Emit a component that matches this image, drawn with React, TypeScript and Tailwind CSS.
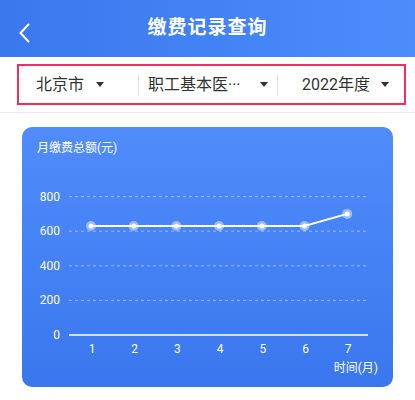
import React from "react";

const months = [1, 2, 3, 4, 5, 6, 7];
const values = [630, 630, 630, 630, 630, 630, 700];
const ticks = [800, 600, 400, 200, 0];

// chart geometry (svg coords, relative to the card below its title)
const x0 = 69;
const step = 42.7;
const yZero = 181;
const scale = 0.173;
const px = (i: number) => x0 + i * step;
const py = (v: number) => yZero - v * scale;

export default function App() {
  return (
    <div
      className="w-[415px] h-[400px] bg-white overflow-hidden"
      style={{ fontFamily: 'Roboto, "Noto Sans CJK SC", sans-serif' }}
    >
      {/* Header */}
      <header className="relative h-[57px] flex items-center justify-center bg-gradient-to-r from-[#3a78ee] to-[#4c8cfb]">
        <svg
          className="absolute left-[19px] top-[23px]"
          width="11"
          height="20"
          viewBox="0 0 11 20"
          fill="none"
          stroke="white"
          strokeWidth="2"
          strokeLinecap="round"
          strokeLinejoin="round"
        >
          <polyline points="9.5 1.5 1.5 10 9.5 18.5" />
        </svg>
        <h1 className="text-[19px] font-bold text-white tracking-[1px]">
          缴费记录查询
        </h1>
      </header>

      {/* Filters */}
      <div className="h-[56px] pt-[7px] pl-[17px] pr-[9px] border-b border-[#ececec]">
        <div className="h-[41px] border-2 border-[#f72d5b] flex items-center text-[16px] text-[#333]">
          <div className="w-[119px] h-full flex items-center pl-[17px]">
            <span>北京市</span>
            <Caret className="ml-[12px]" />
          </div>
          <div className="w-px h-[22px] bg-[#e2e2e2]" />
          <div className="w-[138px] h-full flex items-center justify-between pl-[9px] pr-[9px]">
            <span>职工基本医···</span>
            <Caret />
          </div>
          <div className="w-px h-[22px] bg-[#e2e2e2]" />
          <div className="flex-1 h-full flex items-center pl-[24px]">
            <span>2022年度</span>
            <Caret className="ml-[11px]" />
          </div>
        </div>
      </div>

      {/* Chart card */}
      <div className="mx-[22px] mt-[14px] h-[260px] rounded-[10px] bg-gradient-to-b from-[#508cfa] to-[#3a77ee] overflow-hidden">
        <div className="pl-[15px] pt-[15px] text-[12px] leading-[12px] text-white">
          月缴费总额(元)
        </div>
        <svg width="371" height="233" className="block">
          {ticks.map((t) => (
            <g key={t}>
              <line
                x1={47}
                x2={346}
                y1={py(t)}
                y2={py(t)}
                stroke="white"
                strokeOpacity={t === 0 ? 0.75 : 0.45}
                strokeWidth={t === 0 ? 2 : 1}
                strokeDasharray={t === 0 ? undefined : "3 3"}
              />
              <text
                x={38}
                y={py(t)}
                fill="white"
                fontSize="12"
                textAnchor="end"
                dominantBaseline="central"
              >
                {t}
              </text>
            </g>
          ))}

          <polyline
            points={values.map((v, i) => `${px(i)},${py(v)}`).join(" ")}
            fill="none"
            stroke="white"
            strokeWidth="2"
          />
          {values.map((v, i) => (
            <g key={i}>
              <circle cx={px(i)} cy={py(v)} r="5" fill="white" fillOpacity="0.45" />
              <circle cx={px(i)} cy={py(v)} r="2.5" fill="white" />
            </g>
          ))}

          {months.map((m, i) => (
            <text
              key={m}
              x={px(i) + 1}
              y={195}
              fill="white"
              fontSize="12"
              textAnchor="middle"
              dominantBaseline="central"
            >
              {m}
            </text>
          ))}
          <text
            x={356}
            y={214}
            fill="white"
            fontSize="12"
            textAnchor="end"
            dominantBaseline="central"
          >
            时间(月)
          </text>
        </svg>
      </div>
    </div>
  );
}

function Caret({ className = "" }: { className?: string }) {
  return (
    <svg className={className} width="8" height="5" viewBox="0 0 8 5">
      <polygon points="0,0 8,0 4,5" fill="#333" />
    </svg>
  );
}
